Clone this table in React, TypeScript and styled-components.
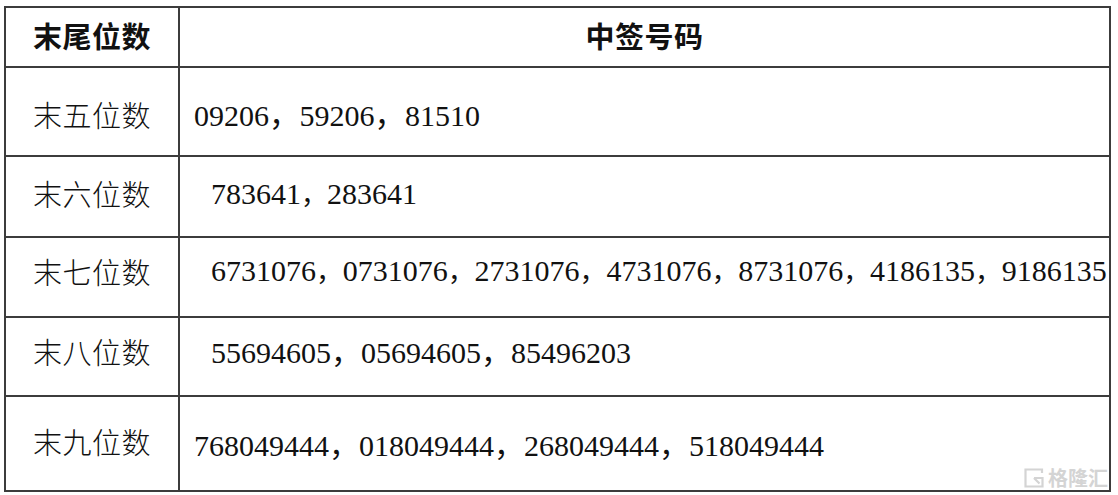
import React from "react";
import styled, { createGlobalStyle } from "styled-components";

const Global = createGlobalStyle`
  html, body { margin: 0; padding: 0; background: #ffffff; }
  body { width: 1118px; height: 495px; overflow: hidden; }
`;

const Page = styled.div`
  padding: 6px 0 0 4px;
  position: relative;
`;

const Table = styled.div`
  display: grid;
  grid-template-columns: 174px 931px;
  grid-template-rows: 60px 89px 81px 80px 79px 95px;
  border-top: 2px solid #3c3c3c;
  border-left: 2px solid #3c3c3c;
  width: max-content;
  position: relative;
`;

const Cell = styled.div<{ $center?: boolean; $pad?: number; $dy?: number }>`
  box-sizing: border-box;
  border-right: 2px solid #3c3c3c;
  border-bottom: 2px solid #3c3c3c;
  display: flex;
  align-items: center;
  justify-content: ${(p) => (p.$center ? "center" : "flex-start")};
  padding-left: ${(p) => p.$pad ?? 0}px;
  padding-top: ${(p) => Math.max(0, p.$dy ?? 0) * 2}px;
  padding-bottom: ${(p) => Math.max(0, -(p.$dy ?? 0)) * 2}px;
  white-space: nowrap;
  overflow: visible;
  color: #111;
  position: relative;
`;

const HeadText = styled.span`
  font-family: "Noto Sans CJK SC", sans-serif;
  font-weight: 700;
  font-size: 29px;
  line-height: 1;
  letter-spacing: 0.5px;
`;

const Label = styled.span`
  font-family: "Noto Sans CJK SC", sans-serif;
  font-weight: 300;
  font-size: 29px;
  line-height: 1;
  letter-spacing: 0.5px;
`;

const Numbers = styled.span`
  display: flex;
  align-items: baseline;
  font-family: "Liberation Serif", serif;
  font-size: 30px;
  line-height: 1;
`;

const Comma = styled.span<{ $w: number }>`
  font-family: "Noto Sans CJK SC", sans-serif;
  font-size: ${(p) => p.$w}px;
  line-height: 1;
`;

const Watermark = styled.div`
  position: absolute;
  right: 1px;
  bottom: 2px;
  display: flex;
  align-items: center;
  gap: 4px;
  color: #d4d4d4;
  font-family: "Noto Sans CJK SC", sans-serif;
  font-size: 20px;
  line-height: 1;
  font-weight: 700;
`;

type Row = { label: string; nums: string[]; pad: number; dy: number; ldy: number; comma: number };

const rows: Row[] = [
  { label: "末五位数", nums: ["09206", "59206", "81510"], pad: 14, dy: 3, ldy: 3, comma: 30.5 },
  { label: "末六位数", nums: ["783641", "283641"], pad: 31, dy: -3, ldy: -3, comma: 26 },
  {
    label: "末七位数",
    nums: ["6731076", "0731076", "2731076", "4731076", "8731076", "4186135", "9186135"],
    pad: 31,
    dy: -6,
    ldy: -6,
    comma: 26.8,
  },
  { label: "末八位数", nums: ["55694605", "05694605", "85496203"], pad: 31, dy: -5, ldy: -5, comma: 30 },
  {
    label: "末九位数",
    nums: ["768049444", "018049444", "268049444", "518049444"],
    pad: 14,
    dy: 1,
    ldy: -2,
    comma: 30,
  },
];

const Logo = () => (
  <svg width="20" height="20" viewBox="0 0 20 20" fill="none" stroke="#d4d4d4" strokeWidth="2.2">
    <path d="M18 5 V1.5 H1.5 V18.5 H18.5 V10 H10" />
    <path d="M10 10 L15.5 15.5" />
  </svg>
);

export default function App() {
  return (
    <>
      <Global />
      <Page>
        <Table>
          <Cell $center $dy={-2}>
            <HeadText>末尾位数</HeadText>
          </Cell>
          <Cell $center $dy={-2}>
            <HeadText>中签号码</HeadText>
          </Cell>
          {rows.map((r, i) => (
            <React.Fragment key={r.label}>
              <Cell $center $dy={r.ldy}>
                <Label>{r.label}</Label>
              </Cell>
              <Cell $pad={r.pad} $dy={r.dy}>
                <Numbers>
                  {r.nums.map((n, j) => (
                    <React.Fragment key={n + j}>
                      <span>{n}</span>
                      {j < r.nums.length - 1 && <Comma $w={r.comma}>，</Comma>}
                    </React.Fragment>
                  ))}
                </Numbers>
                {i === rows.length - 1 && (
                  <Watermark>
                    <Logo />
                    <span>格隆汇</span>
                  </Watermark>
                )}
              </Cell>
            </React.Fragment>
          ))}
        </Table>
      </Page>
    </>
  );
}
